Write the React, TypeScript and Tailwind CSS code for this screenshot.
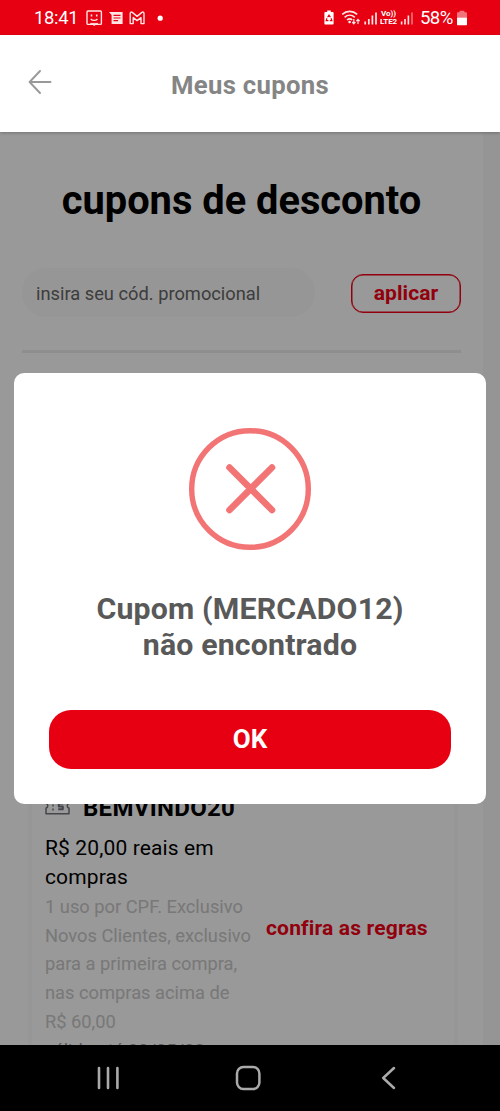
function StatusBar() {
  return (
    <div className="flex h-[35px] shrink-0 items-center bg-[#e60012] pl-[34px] pr-[33px] text-white">
      <span className="w-[52px] pt-[2px] text-[18.4px] leading-none tracking-[-0.3px]">18:41</span>

      {/* Notificações */}
      <svg width="80" height="16" viewBox="0 0 80 16" fill="none" stroke="#ffe6e4">
        <rect x="1" y="1" width="14.4" height="13.4" rx="1" strokeWidth="1.4" />
        <path d="M4.7 8.8c1.6 2.2 5.2 2.2 6.8 0" strokeWidth="1.3" />
        <path d="M5.5 4.6v1.8M10.7 4.6v1.8" strokeWidth="1.6" />
        <path d="M4.5 13.4l3.7 2 3.7-2z" fill="#ffe6e4" strokeWidth="0.8" />
        <path d="M23 2h13.6v12H25.6V5z" fill="#ffe6e4" stroke="none" />
        <path d="M27.5 5.4h7M27.5 8h7M27.5 10.6h4.6" stroke="#e60012" strokeWidth="1.2" />
        <path
          d="M44.2 13.6V3.4c0-1.4 1.3-1.6 2.1-1l4.8 4 4.8-4c.8-.6 2.1-.4 2.1 1v10.2h-3V7.6l-3.9 3-3.9-3v6z"
          strokeWidth="1.4"
          strokeLinejoin="round"
        />
        <circle cx="74.2" cy="8.2" r="2.6" fill="#fff" stroke="none" />
      </svg>

      {/* Bateria, wi-fi e sinal */}
      <div className="ml-auto flex h-full items-center">
        <svg width="56" height="18" viewBox="0 0 56 18" fill="none" stroke="#ffe6e4">
          <path d="M3.4 3h1.8V1.6h3.6V3h1.8c.6 0 1 .4 1 1v10.6c0 .6-.4 1-1 1H3.4c-.6 0-1-.4-1-1V4c0-.6.4-1 1-1z" fill="#fff" stroke="none" />
          <path d="M5.6 8.2L7 6l1.4 2.2M9 9.2l.9 2.4H7.8M6.4 11.6H4.2l.8-2.4" stroke="#e60012" strokeWidth="1.2" />
          <path d="M20.2 5.4c4.4-4 10.6-4 15 0M22.6 8.3c3-2.7 7.2-2.7 10.2 0M25 11c1.6-1.4 3.8-1.4 5.2 0" strokeWidth="1.6" />
          <circle cx="27.6" cy="13" r="1.3" fill="#fff" stroke="none" />
          <path d="M31.8 10v4.6M30.2 13l1.6 1.8 1.6-1.8M36 15v-4.6M34.4 12.2l1.6-1.8 1.6 1.8" strokeWidth="1.2" />
          <path d="M43.2 12.6v3M46.8 10V15.6M50.4 6.6V15.6M54 3.6V15.6" strokeWidth="1.7" />
        </svg>
        <div className="flex w-[21px] flex-col items-center text-[8px] font-bold leading-[8px] tracking-[-0.1px]">
          <span>Vo))</span>
          <span>LTE2</span>
        </div>
        <svg width="14" height="18" viewBox="0 0 14 18" className="ml-[1px]" fill="none" stroke="#ffe6e4" strokeWidth="1.6">
          <path d="M1.6 12.6v3M5 10V15.6M8.4 6.6V15.6" />
          <path d="M12 3.6V15.6" opacity="0.5" />
        </svg>
        <span className="ml-[6px] w-[35px] pt-[2px] text-[18.6px] leading-none tracking-[-0.6px]">58%</span>
        <svg width="10" height="16" viewBox="0 0 10 16" className="ml-[2px]" fill="#fff">
          <path d="M0 3.2c0-.7.4-1 1-1h1.6V.8h4.8v1.4H9c.6 0 1 .3 1 1v4.4H0z" opacity="0.45" />
          <path d="M0 7.6h10v6.6c0 .6-.4 1-1 1H1c-.6 0-1-.4-1-1z" />
        </svg>
      </div>
    </div>
  );
}

function Header() {
  return (
    <header className="z-10 grid h-[97px] shrink-0 grid-cols-[60px_1fr_60px] items-center bg-white shadow-[0_1px_3px_rgba(0,0,0,0.25)]">
      <svg width="24" height="24" viewBox="0 0 24 24" className="mb-[4px] ml-[28px]" fill="none" stroke="#999" strokeWidth="1.9" strokeLinecap="round" strokeLinejoin="round">
        <path d="M12 1L1.6 12 12 23M1.6 12H22.5" />
      </svg>
      <h1 className="pt-[4px] text-center text-[25.7px] font-bold leading-none tracking-[0.3px] text-[#858585]">Meus cupons</h1>
    </header>
  );
}

function Coupon() {
  return (
    <section className="ml-[28px] mr-[25px] mt-[430px] h-[300px] border-x-4 border-[#fafafa] pl-[13px]">
      <div className="flex items-center gap-[13px] pt-[10px]">
        <svg width="25" height="20" viewBox="0 0 25 20" fill="none" stroke="#71767e" strokeWidth="1.5" strokeLinejoin="round">
          <path d="M1 .8h23v4.5c-2.4 1-2.4 4 0 5v5.5H1v-5.5c2.4-1 2.4-4 0-5z" />
          <path d="M8 2.5v12" strokeDasharray="2 2" />
          <path d="M18.2 5.6h-4.4v2.8h4v2.8h-4.6" strokeWidth="2" />
        </svg>
        <h3 className="text-[24px] font-bold leading-[30px] tracking-[0.3px] text-black">BEMVINDO20</h3>
      </div>
      <div className="flex items-center">
        <div className="w-[221px] shrink-0 pt-[11px]">
          <p className="w-[190px] text-[21px] leading-[29px] tracking-[0.13px] text-black">R$ 20,00 reais em compras</p>
          <p className="whitespace-nowrap pt-px text-[18.3px] leading-[28.7px] text-[#c8c8c8]">
            1 uso por CPF. Exclusivo<br />
            Novos Clientes, exclusivo<br />
            para a primeira compra,<br />
            nas compras acima de<br />
            R$ 60,00<br />
            <span className="text-[#999]">válido até 30/05/22</span>
          </p>
        </div>
        <a className="mb-[31px] whitespace-nowrap text-[21px] font-bold tracking-[0.17px] text-[#f20014]">confira as regras</a>
      </div>
    </section>
  );
}

function Dialog() {
  return (
    <div className="absolute inset-0 bg-black/40 px-[14px] pt-[241px]">
      <div className="flex h-[431px] flex-col items-center rounded-[10px] bg-white px-[35px] pt-[55px]">
        <svg width="122" height="122" viewBox="0 0 122 122" className="shrink-0" fill="none" stroke="#f27474">
          <circle cx="61" cy="61" r="58.3" strokeWidth="5.4" />
          <path d="M40.5 39.5l42.5 42.5M83 39.5L40.5 82" strokeWidth="6.6" strokeLinecap="round" />
        </svg>
        <h2 className="mt-[41px] text-center text-[30.3px] font-bold leading-[36px] tracking-[0.15px] text-[#595959]">
          Cupom (MERCADO12)<br />não encontrado
        </h2>
        <button className="mt-[47px] h-[59px] w-full shrink-0 rounded-[22px] bg-[#e60012] text-[26px] font-bold text-white">OK</button>
      </div>
    </div>
  );
}

function NavBar() {
  return (
    <nav className="flex h-[66px] shrink-0 items-center bg-black pl-[96px]">
      <svg width="24" height="24" viewBox="0 0 24 24" stroke="#aaa" strokeWidth="2.6" strokeLinecap="round">
        <path d="M3 2v20M12 2v20M21.4 2v20" />
      </svg>
      <svg width="26" height="26" viewBox="0 0 26 26" className="ml-[115px]" fill="none" stroke="#aaa" strokeWidth="2.5">
        <rect x="2" y="2" width="22.4" height="22" rx="6.4" />
      </svg>
      <svg width="16" height="24" viewBox="0 0 16 24" className="ml-[120px]" fill="none" stroke="#aaa" strokeWidth="2.5" strokeLinecap="round" strokeLinejoin="round">
        <path d="M13 2L2.2 12 13 22" />
      </svg>
    </nav>
  );
}

export default function App() {
  return (
    <div className="flex h-[1111px] w-[500px] flex-col overflow-hidden bg-white font-['Roboto',sans-serif]">
      <StatusBar />
      <Header />
      <main className="relative h-[913px] shrink-0 overflow-hidden bg-[#f9f9f9]">
        <div className="h-full w-[483px] bg-white">
          <h2 className="pt-[46px] text-center text-[39.8px] font-bold leading-[46px] text-black">cupons de desconto</h2>
          <div className="mx-[22px] mt-[44px] flex items-center justify-between border-b-[3px] border-[#ededed] pb-[33px]">
            <div className="flex h-[49px] w-[293px] items-center rounded-[24px] bg-[#fafafa] pl-[14px] pt-[2px] text-[18.3px] text-[#666]">
              insira seu cód. promocional
            </div>
            <button className="mt-px h-[39px] w-[110px] rounded-[12px] border border-[#f20014] text-[21px] font-bold leading-none tracking-[0.1px] text-[#f20014] ring-[0.5px] ring-inset ring-[#f20014]">
              aplicar
            </button>
          </div>
          <Coupon />
        </div>
        <Dialog />
      </main>
      <NavBar />
    </div>
  );
}
